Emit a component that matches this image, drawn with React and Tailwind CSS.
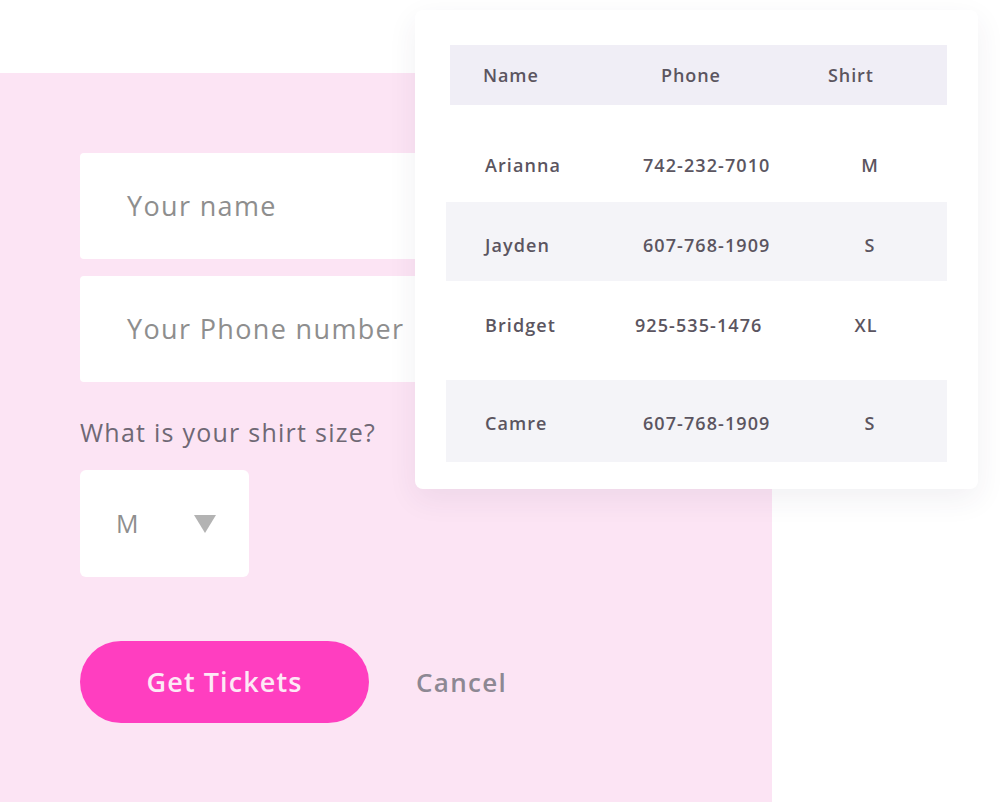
import React from 'react'

const rows = [
  { name: 'Arianna', phone: '742-232-7010', shirt: 'M', cls: 'h-[97px] pt-[23px]', bg: '', phoneCls: 'w-[200px]' },
  { name: 'Jayden', phone: '607-768-1909', shirt: 'S', cls: 'h-[79px] pt-[7px]', bg: 'bg-[#f4f4f8]', phoneCls: 'w-[200px]' },
  { name: 'Bridget', phone: '925-535-1476', shirt: 'XL', cls: 'h-[99px] pb-[11px]', bg: '', phoneCls: 'w-[204px] -ml-[8px]' },
  { name: 'Camre', phone: '607-768-1909', shirt: 'S', cls: 'h-[82px] pt-[4px]', bg: 'bg-[#f4f4f8]', phoneCls: 'w-[200px]' },
]

export default function App() {
  return (
    <div
      className="relative w-[1000px] h-[802px] overflow-hidden bg-white"
      style={{ fontFamily: '"Open Sans", "Noto Sans", sans-serif' }}
    >
      {/* Pink form panel */}
      <div className="mt-[73px] w-[772px] h-[729px] bg-[#fce4f4] pl-[80px] pt-[80px]">
        <div className="w-[620px] h-[106px] bg-white rounded-[4px] flex items-center pl-[47px] text-[27px] tracking-[0.05em] text-[#8e8e8e]">
          Your name
        </div>
        <div className="mt-[17px] w-[620px] h-[106px] bg-white rounded-[4px] flex items-center pl-[47px] text-[27px] tracking-[0.05em] text-[#8e8e8e]">
          Your Phone number
        </div>
        <div className="mt-[34px] text-[25px] leading-[32px] tracking-[0.05em] text-[#6f6874]">What is your shirt size?</div>
        <div className="mt-[22px] w-[169px] h-[107px] bg-white rounded-[6px] flex items-center pl-[36px] pr-[33px] justify-between">
          <span className="text-[25px] text-[#8e8e8e]">M</span>
          <svg width="22" height="18" viewBox="0 0 22 18">
            <path d="M0 0 H22 L11 18 Z" fill="#b3b3b3" />
          </svg>
        </div>
        <div className="mt-[64px] flex items-center">
          <button className="w-[289px] h-[82px] rounded-full bg-[#ff3ec0] text-[27px] tracking-[0.04em] font-semibold text-[#fde9f6]">
            Get Tickets
          </button>
          <span className="ml-[47px] text-[26px] tracking-[0.05em] font-semibold text-[#8d8893]">Cancel</span>
        </div>
      </div>

      {/* Table card */}
      <div className="absolute left-[415px] top-[10px] w-[563px] h-[479px] bg-white rounded-[8px] shadow-[0_10px_30px_rgba(60,40,80,0.07)] px-[31px] pt-[35px]">
        <div className="ml-[4px] h-[60px] bg-[#f0eef6] flex items-center text-[18px] tracking-[0.05em] font-semibold text-[#5b5560]">
          <span className="pl-[33px] w-[211px]">Name</span>
          <span className="w-[167px]">Phone</span>
          <span>Shirt</span>
        </div>
        {rows.map(r => (
          <div key={r.name} className={`${r.cls} ${r.bg} flex items-center text-[18px] tracking-[0.06em] font-semibold text-[#5b5560]`}>
            <span className="pl-[39px] w-[197px]">{r.name}</span>
            <span className={r.phoneCls}>{r.phone}</span>
            <span className="w-[54px] text-center">{r.shirt}</span>
          </div>
        ))}
      </div>
    </div>
  )
}
